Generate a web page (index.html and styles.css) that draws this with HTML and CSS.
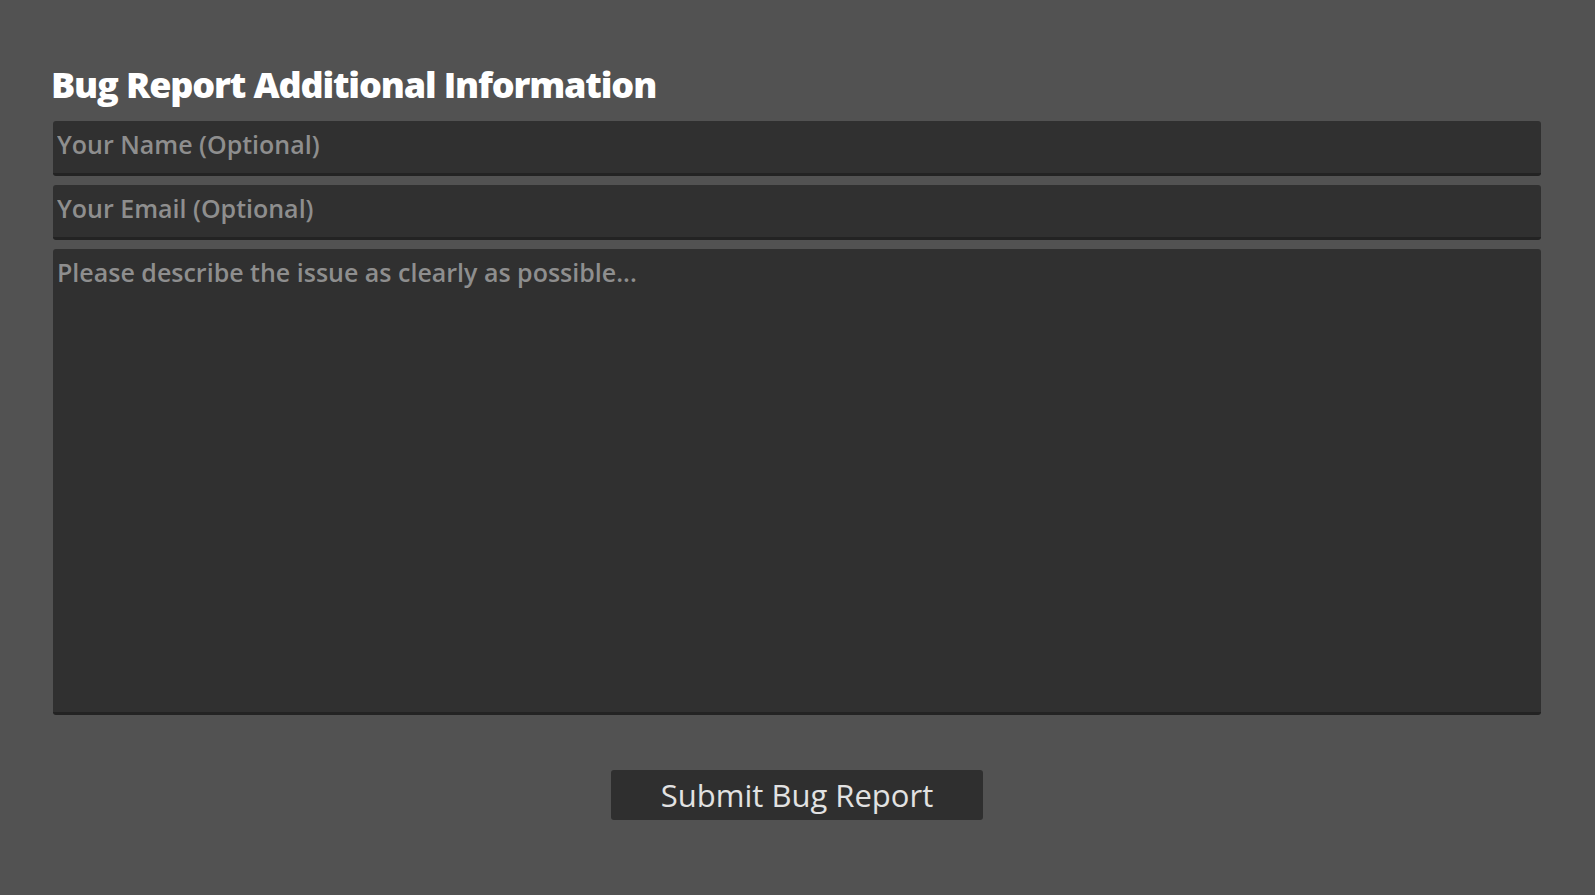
FILE: index.html
```html
<!DOCTYPE html>
<html lang="en">
<head>
<meta charset="utf-8">
<title>Bug Report</title>
<link rel="stylesheet" href="styles.css">
</head>
<body>
<main class="page">
  <h1 class="title">Bug Report Additional Information</h1>
  <div class="fields">
    <input class="field" type="text" placeholder="Your Name (Optional)">
    <input class="field" type="email" placeholder="Your Email (Optional)">
    <textarea class="field area" placeholder="Please describe the issue as clearly as possible..."></textarea>
  </div>
  <div class="actions">
    <button class="submit" type="button">Submit Bug Report</button>
  </div>
</main>
</body>
</html>
```

FILE: styles.css
```css
html, body {
  margin: 0;
  padding: 0;
  background: #525252;
  height: 100%;
}
.page {
  box-sizing: border-box;
  padding: 67px 54px 0 53px;
  display: flex;
  flex-direction: column;
  font-family: "Open Sans", "Noto Sans", sans-serif;
}
.title {
  margin: 0 0 0 -2px;
  font-size: 36px;
  line-height: 36px;
  font-weight: 800;
  color: #ffffff;
  letter-spacing: -1.15px;
}
.fields {
  margin-top: 18px;
  display: flex;
  flex-direction: column;
  gap: 9px;
}
.field {
  box-sizing: border-box;
  display: block;
  width: 100%;
  height: 55px;
  margin: 0;
  padding: 7px 4px 13px 4px;
  border: none;
  border-bottom: 3px solid #232323;
  border-radius: 3px;
  background: #303030;
  color: #d0d0d0;
  font-family: "Open Sans", "Noto Sans", sans-serif;
  font-size: 25px;
  font-weight: 600;
  line-height: 32px;
  outline: none;
  resize: none;
}
.field::placeholder {
  color: #8e8e8e;
  opacity: 1;
}
.area {
  height: 466px;
  padding-bottom: 0;
}
.actions {
  display: flex;
  justify-content: center;
  margin-top: 55px;
}
.submit {
  width: 372px;
  height: 50px;
  border: none;
  border-radius: 3px;
  background: #2f2f2f;
  color: #e2e2e2;
  font-family: "Open Sans", "Noto Sans", sans-serif;
  font-size: 31px;
  font-weight: 500;
  padding: 0;
}
```
